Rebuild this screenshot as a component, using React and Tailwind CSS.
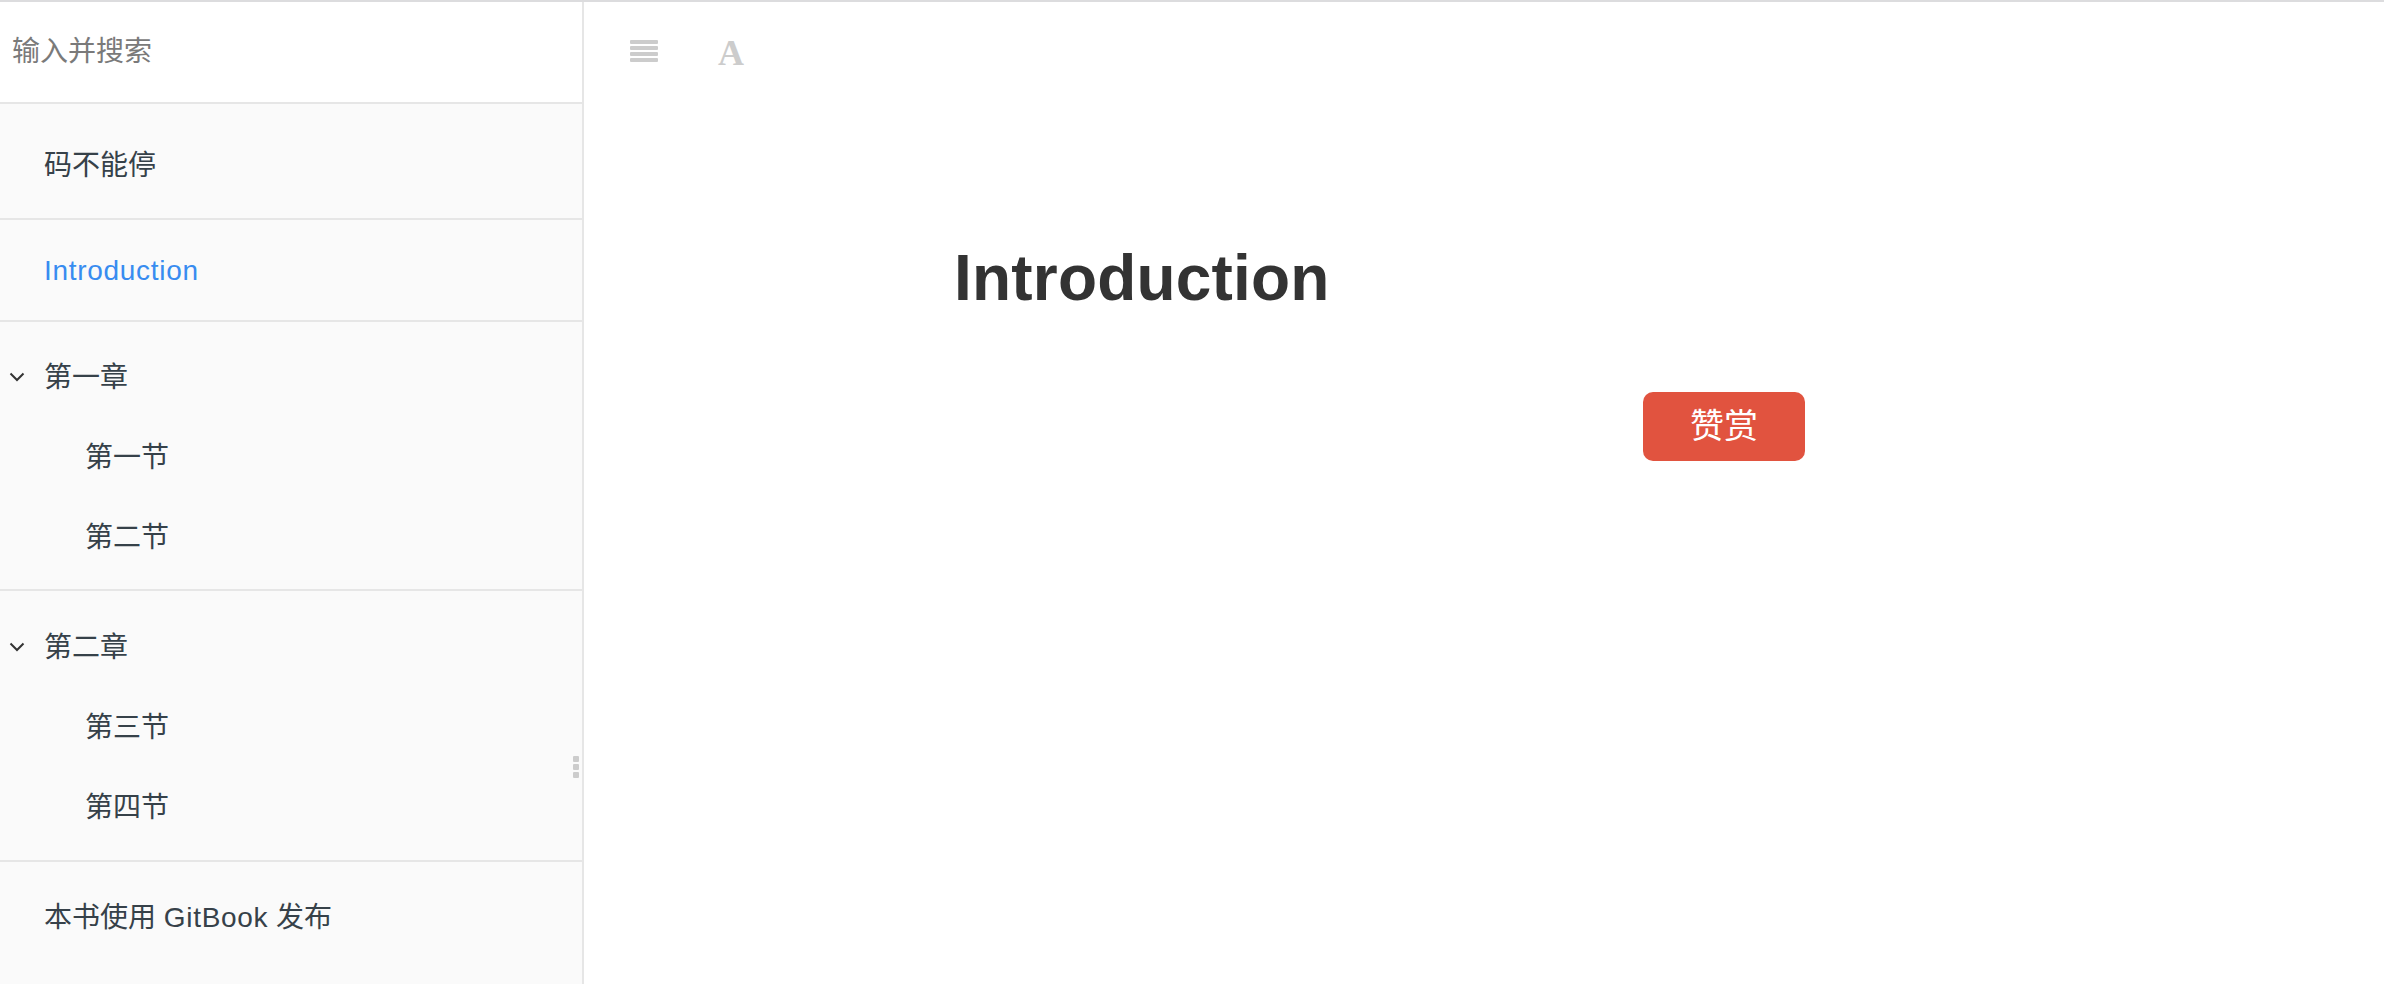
import React from "react";

const font = { fontFamily: '"Liberation Sans", "Noto Sans CJK SC", sans-serif' };

function Divider({ className }) {
  return <div className={"h-[2px] bg-[#e6e6e6] " + className} />;
}

function Latin({ children }) {
  return <span className="tracking-[0.7px]">{children}</span>;
}

function Item({ children, indent = false, active = false, chevron = false }) {
  return (
    <div
      className={
        "relative h-[80px] flex items-center text-[28px] " +
        (indent ? "pl-[85px] " : "pl-[44px] ") +
        (active ? "text-[#388cf0]" : "text-[#364149] pt-[5px]")
      }
    >
      {chevron && (
        <svg
          className="absolute left-[9px] top-[37px]"
          width="16"
          height="10"
          viewBox="0 0 16 10"
          fill="none"
        >
          <path d="M1.5 1.5 L8 8 L14.5 1.5" stroke="#333" strokeWidth="2" />
        </svg>
      )}
      <span>{children}</span>
    </div>
  );
}

export default function App() {
  return (
    <div className="w-[2384px] h-[984px] overflow-hidden border-t-2 border-[#dcdcde] flex bg-white" style={font}>
      <aside className="relative w-[584px] shrink-0 h-full bg-[#fafafa] border-r-2 border-[#e6e6e6] flex flex-col">
        <div className="h-[102px] shrink-0 bg-white border-b-2 border-[#e6e6e6] flex items-center pl-[12px]">
          <span className="text-[28px] text-[#7a7a7a]">输入并搜索</span>
        </div>
        <nav className="pt-[19px]">
          <Item>码不能停</Item>
          <Divider className="mt-[15px] mb-[11px]" />
          <Item active>
            <Latin>Introduction</Latin>
          </Item>
          <Divider className="mt-[9px] mb-[13px]" />
          <Item chevron>第一章</Item>
          <Item indent>第一节</Item>
          <Item indent>第二节</Item>
          <Divider className="mt-[14px] mb-[14px]" />
          <Item chevron>第二章</Item>
          <Item indent>第三节</Item>
          <Item indent>第四节</Item>
          <Divider className="mt-[15px] mb-[13px]" />
          <Item>
            本书使用 <Latin>GitBook</Latin> 发布
          </Item>
        </nav>
        <div className="absolute right-[3px] top-[754px] flex flex-col gap-[2px]">
          <div className="w-[6px] h-[6px] rounded-[1px] bg-[#cccccc]" />
          <div className="w-[6px] h-[6px] rounded-[1px] bg-[#cccccc]" />
          <div className="w-[6px] h-[6px] rounded-[1px] bg-[#cccccc]" />
        </div>
      </aside>
      <main className="flex-1 h-full flex flex-col">
        <div className="h-[100px] shrink-0 flex items-start pt-[38px] pl-[46px] gap-[60px]">
          <div className="flex flex-col gap-[2.5px] w-[28px]">
            <div className="h-[3.5px] rounded-[1px] bg-[#cccccc]" />
            <div className="h-[3.5px] rounded-[1px] bg-[#cccccc]" />
            <div className="h-[3.5px] rounded-[1px] bg-[#cccccc]" />
            <div className="h-[3.5px] rounded-[1px] bg-[#cccccc]" />
          </div>
          <span
            className="text-[36px] font-bold leading-none text-[#cccccc] -mt-[5px]"
            style={{ fontFamily: '"Liberation Serif", serif' }}
          >
            A
          </span>
        </div>
        <div className="pl-[370px]">
          <h1 className="mt-[138px] text-[64px] font-bold leading-[77px] tracking-[0.2px] text-[#333333]">
            Introduction
          </h1>
          <div className="mt-[75px] pl-[689px]">
            <button className="w-[162px] h-[69px] rounded-[10px] bg-[#e1533f] text-white text-[34px] flex items-center justify-center">
              赞赏
            </button>
          </div>
        </div>
      </main>
    </div>
  );
}
